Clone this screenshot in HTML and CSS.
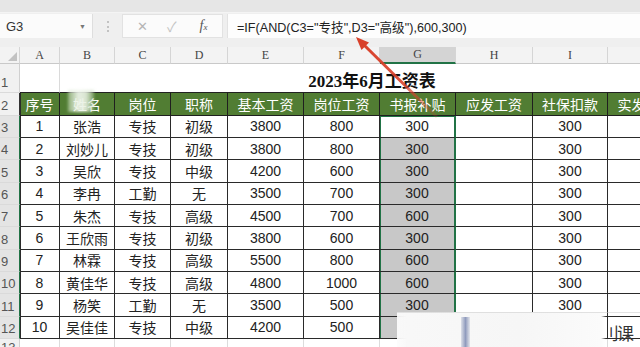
FILE: index.html
```html
<!DOCTYPE html>
<html lang="zh">
<head>
  <meta charset="UTF-8" />
  <title>2023年6月工资表</title>
  <link rel="stylesheet" href="styles.css">
</head>
<body>
  <div class="titlebar"></div>
  <div class="fbar">
    <div class="namebox">G3<span class="drop">▼</span></div>
    <span class="grip"></span>
    <div class="btnbox">
      <span class="btn x">✕</span>
      <span class="btn ok">✓</span>
      <span class="btn fx">f<small>x</small></span>
    </div>
    <div class="formula">=IF(AND(C3="专技",D3="高级"),600,300)</div>
  </div>

  <div class="grid">
    <table class="sheet">
      <colgroup>
        <col style="width:20px"><col style="width:40px"><col style="width:55px"><col style="width:56px"><col style="width:57px"><col style="width:76px"><col style="width:76px"><col style="width:76px"><col style="width:77px"><col style="width:75px"><col style="width:76px">
      </colgroup>
      <tr class="colhead">
        <th class="corner"><span class="tri"></span></th>
        <th>A</th><th>B</th><th>C</th><th>D</th><th>E</th><th>F</th><th class="on">G</th><th>H</th><th>I</th><th>J</th>
      </tr>
      <tr class="r1">
        <th class="rh">1</th>
        <td class="blank"></td>
        <td class="title" colspan="9">2023年6月工资表</td>
      </tr>
      <tr class="r2">
        <th class="rh dark">2</th>
        <td class="hd first">序号</td><td class="hd">姓名</td><td class="hd">岗位</td><td class="hd">职称</td><td class="hd">基本工资</td><td class="hd">岗位工资</td><td class="hd">书报补贴</td><td class="hd">应发工资</td><td class="hd">社保扣款</td><td class="hd">实发工资</td>
      </tr>
      <tr class="row">
        <th class="rh sel">3</th>
        <td class="first">1</td><td>张浩</td><td>专技</td><td>初级</td><td>3800</td><td>800</td><td class="g active">300</td><td></td><td>300</td><td></td>
      </tr>
      <tr class="row">
        <th class="rh sel">4</th>
        <td class="first">2</td><td>刘妙儿</td><td>专技</td><td>初级</td><td>3800</td><td>800</td><td class="g">300</td><td></td><td>300</td><td></td>
      </tr>
      <tr class="row">
        <th class="rh sel">5</th>
        <td class="first">3</td><td>吴欣</td><td>专技</td><td>中级</td><td>4200</td><td>600</td><td class="g">300</td><td></td><td>300</td><td></td>
      </tr>
      <tr class="row">
        <th class="rh sel">6</th>
        <td class="first">4</td><td>李冉</td><td>工勤</td><td>无</td><td>3500</td><td>700</td><td class="g">300</td><td></td><td>300</td><td></td>
      </tr>
      <tr class="row">
        <th class="rh sel">7</th>
        <td class="first">5</td><td>朱杰</td><td>专技</td><td>高级</td><td>4500</td><td>700</td><td class="g">600</td><td></td><td>300</td><td></td>
      </tr>
      <tr class="row">
        <th class="rh sel">8</th>
        <td class="first">6</td><td>王欣雨</td><td>专技</td><td>初级</td><td>3800</td><td>600</td><td class="g">300</td><td></td><td>300</td><td></td>
      </tr>
      <tr class="row">
        <th class="rh sel">9</th>
        <td class="first">7</td><td>林霖</td><td>专技</td><td>高级</td><td>5500</td><td>800</td><td class="g">600</td><td></td><td>300</td><td></td>
      </tr>
      <tr class="row">
        <th class="rh sel">10</th>
        <td class="first">8</td><td>黄佳华</td><td>专技</td><td>高级</td><td>4800</td><td>1000</td><td class="g">600</td><td></td><td>300</td><td></td>
      </tr>
      <tr class="row">
        <th class="rh sel">11</th>
        <td class="first">9</td><td>杨笑</td><td>工勤</td><td>无</td><td>3500</td><td>500</td><td class="g">300</td><td></td><td>300</td><td></td>
      </tr>
      <tr class="row">
        <th class="rh sel">12</th>
        <td class="first">10</td><td>吴佳佳</td><td>专技</td><td>中级</td><td>4200</td><td>500</td><td class="g last">300</td><td></td><td>300</td><td></td>
      </tr>
      <tr class="r13">
        <th class="rh">13</th>
        <td class="empty"></td><td class="empty"></td><td class="empty"></td><td class="empty"></td><td class="empty"></td><td class="empty"></td><td class="empty"></td><td class="empty"></td><td class="empty"></td><td class="empty"></td>
      </tr>
    </table>
  </div>

  <div class="smudge"></div>
  <div class="watermark"><span class="streak"></span><span class="wm-text">刂课</span></div>

  <svg class="arrow" width="640" height="347" viewBox="0 0 640 347">
    <defs>
      <linearGradient id="fade" gradientUnits="userSpaceOnUse" x1="358" y1="40" x2="437" y2="117">
        <stop offset="0" stop-color="#d8402a" stop-opacity="1"/>
        <stop offset="0.55" stop-color="#d8402a" stop-opacity="0.9"/>
        <stop offset="1" stop-color="#d8402a" stop-opacity="0.15"/>
      </linearGradient>
    </defs>
    <line x1="362" y1="43" x2="437" y2="117" stroke="url(#fade)" stroke-width="3"/>
    <polygon points="356,37 361.5,50 369,42.5" fill="#d8402a"/>
  </svg>
</body>
</html>
```

FILE: styles.css
```css
body {
  margin: 0;
  width: 640px;
  height: 347px;
  overflow: hidden;
  background: #fff;
  font-family: "Liberation Sans", "Noto Sans CJK SC", sans-serif;
  color: #222;
  position: relative;
}
.titlebar {
  height: 12px;
  background: #e6e6e6;
  border-bottom: 1px solid #f4f4f4;
}
.fbar {
  height: 33px;
  padding-top: 1px;
  background: #efefef;
  display: flex;
  align-items: flex-start;
}
.namebox {
  width: 93px;
  height: 24px;
  background: #fbfbfb;
  border-right: 1px solid #dedede;
  box-sizing: border-box;
  display: flex;
  align-items: center;
  padding-left: 6px;
  font-size: 13px;
  color: #333;
}
.drop {
  margin-left: auto;
  margin-right: 6px;
  font-size: 7px;
  color: #777;
}
.grip {
  width: 0;
  height: 11px;
  margin: 7px 13px 0 14px;
  border-left: 2px dotted #c2c2c2;
}
.btnbox {
  width: 101px;
  height: 24px;
  background: #fbfbfb;
  border: 1px solid #e2e2e2;
  box-sizing: border-box;
  display: flex;
  align-items: center;
}
.btn {
  color: #b5b5b5;
  font-size: 13px;
}
.x { margin-left: 14px; }
.ok { margin-left: 19px; color: #c4c4c4; font-size: 14px; }
.fx {
  margin-left: 23px;
  font-family: "Liberation Serif", serif;
  font-style: italic;
  color: #555;
  font-size: 14px;
}
.fx small { font-size: 9px; }
.formula {
  margin-left: 4px;
  flex: 1;
  height: 24px;
  background: #fdfdfd;
  border-left: 1px solid #e2e2e2;
  display: flex;
  align-items: center;
  padding-left: 9px;
  font-size: 12.6px;
  color: #222;
}

.grid { overflow: hidden; }
.sheet {
  table-layout: fixed;
  width: 684px;
  border-collapse: separate;
  border-spacing: 0;
}
.sheet th, .sheet td {
  padding: 0;
  box-sizing: border-box;
  text-align: center;
  white-space: nowrap;
  overflow: hidden;
  font-weight: normal;
}
.colhead { height: 16px; }
.colhead th {
  background: #f3f3f3;
  border-right: 1px solid #d5d5d5;
  border-bottom: 1px solid #c9c9c9;
  font-family: "Liberation Serif", serif;
  font-size: 12px;
  color: #444;
}
.colhead th.on {
  background: #d4d4d4;
  border-bottom: 2px solid #217346;
}
.corner { position: relative; }
.tri {
  position: absolute;
  right: 2px;
  bottom: 2px;
  width: 0;
  height: 0;
  border-left: 9px solid transparent;
  border-bottom: 9px solid #c2c2c2;
}
.sheet .rh {
  background: #f1f1f1;
  border-right: 1px solid #d0d0d0;
  border-bottom: 1px solid #dadada;
  font-size: 13px;
  color: #555;
  text-align: left;
  padding-left: 1px;
  vertical-align: bottom;
  line-height: 18px;
}
.sheet .rh.dark { border-right-color: #333; }
.sheet .rh.sel {
  background: #e4e4e4;
  border-right: 1px solid #217346;
}

.r1 { height: 27px; }
.blank {
  border-right: 1px solid #dadada;
  border-bottom: 1px solid #222;
}
.sheet .title {
  border-bottom: 1px solid #222;
  font-family: "Liberation Serif", "Noto Sans CJK SC", serif;
  font-weight: bold;
  font-size: 17px;
  color: #111;
  padding-top: 3px;
}

.r2 { height: 22.7px; }
.hd {
  background: #517d33;
  color: #fff;
  font-size: 14px;
  border-right: 1px solid #1f1f1f;
  border-bottom: 1px solid #1f1f1f;
}
.row { height: 22.33px; }
.row td {
  font-size: 14px;
  border-right: 1px solid #2a2a2a;
  border-bottom: 1px solid #2a2a2a;
}
.first { box-shadow: inset 1px 0 #2a2a2a; }
.row td.g {
  background: #c8c8c8;
  border-right: 2px solid #217346;
  box-shadow: inset 1px 0 #217346;
}
.row td.active {
  background: #fff;
  box-shadow: inset 1px 0 #217346, inset 0 1px #217346;
}
.r13 { height: 14px; }
.empty {
  border-right: 1px solid #dcdcdc;
}

.smudge {
  position: absolute;
  left: 68px;
  top: 90px;
  width: 26px;
  height: 22px;
  background: linear-gradient(to right, rgba(210, 228, 200, 0.5), rgba(238, 244, 234, 0.95) 40%, rgba(232, 240, 226, 0.9) 70%, rgba(180, 205, 165, 0.4));
  filter: blur(1.5px);
}
.watermark {
  position: absolute;
  left: 397px;
  top: 312px;
  width: 243px;
  height: 35px;
  background: linear-gradient(to right, rgba(252, 252, 252, 0.92), #f8f8f8 4%, #f6f6f6 50%, #fbfbfb 84%, rgba(255, 255, 255, 0) 86%);
  border-top: 1px solid rgba(200, 200, 200, 0.5);
}
.streak {
  position: absolute;
  left: 64px;
  top: 4px;
  width: 9px;
  height: 31px;
  background: linear-gradient(to right, rgba(120, 135, 175, 0.2), rgba(110, 125, 170, 0.75), rgba(150, 160, 190, 0.2));
}
.wm-text {
  position: absolute;
  left: 205px;
  top: 7px;
  font-family: "Noto Sans CJK SC", sans-serif;
  font-size: 17px;
  color: #333;
  letter-spacing: -2px;
}
.arrow {
  position: absolute;
  left: 0;
  top: 0;
  pointer-events: none;
}
```
